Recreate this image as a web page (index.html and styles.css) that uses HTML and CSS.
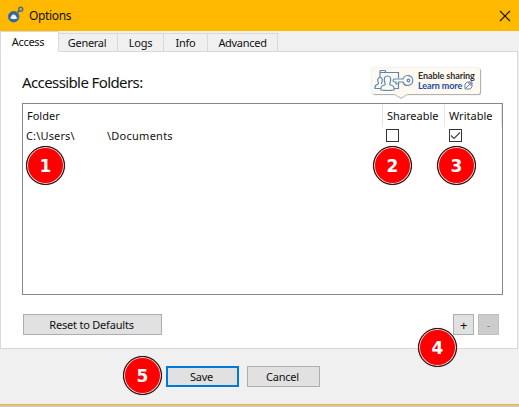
FILE: index.html
```html
<!DOCTYPE html>
<html lang="en">
<head>
<meta charset="utf-8">
<title>Options</title>
<link rel="stylesheet" href="styles.css">
</head>
<body>
<div class="window">
  <header class="titlebar">
    <svg class="app-icon" width="18" height="18" viewBox="0 0 18 18">
      <circle cx="6.700" cy="10.700" r="5.300" fill="#2866ad" stroke="#5c6b78" stroke-width="1"/>
      <path d="M3 12C4.500 11.500 4 8.500 6.500 8.500s2 2 4 3.500c-1 1.500-6 1.500-7.500 0z" fill="#f2f5fa"/>
      <path d="M10.500 6.500l1.500-1.500" stroke="#5c6b58" stroke-width="2"/>
      <circle cx="13.700" cy="3.300" r="2" fill="#d6b34b" stroke="#486b91" stroke-width="1.500"/>
    </svg>
    <h1>Options</h1>
    <svg class="close" width="12" height="12" viewBox="0 0 12 12"><path d="M1 1l10 10M11 1L1 11" fill="none" stroke="#171300" stroke-width="1.100"/></svg>
  </header>
  <nav class="tabs">
    <div class="tab active"><span>Access</span></div>
    <div class="tab general"><span>General</span></div>
    <div class="tab logs"><span>Logs</span></div>
    <div class="tab info"><span>Info</span></div>
    <div class="tab advanced"><span>Advanced</span></div>
  </nav>
  <main class="panel">
    <div class="heading">
      <h2>Accessible Folders:</h2>
      <div class="tip">
        <svg class="tip-icon" width="40" height="24" viewBox="0 0 40 24" fill="none" stroke="#5b87b5" stroke-width="1.200">
          <path d="M6 8V2.500q0-1 1-1h4l1 2h12.500V9M6 3.500h6M24.500 14v5.500H20"/>
          <path d="M9 19.500H1q-.5-3.500 3-4.500 1-.5 0-2Q3 8.500 6 8.500T8 13q-1 1.500 0 2"/>
          <path d="M7 21q-1-4 3.500-5 1.500-1 .3-2.500-1.800-6.500 2.700-6.500t2.700 6.500q-1.200 1.500.3 2.500 4.500 1 3.500 5-6.500 1-13 0z" fill="#fffaf1"/>
          <path d="M29 10h-8q-2 0-2 1.500t2 1.500h1v2h2.500v-2H29q1 3.500 4.500 3.500a5 5 0 1 0-4.500-6.500z" fill="#fffaf1"/>
          <circle cx="34.500" cy="11.500" r="1.300"/>
        </svg>
        <div class="tip-text">
          <div class="enable"><span>Enable sharing</span></div>
          <div class="learn"><span>Learn more</span><svg width="9" height="9" viewBox="0 0 9 9" fill="none" stroke="#637cb8"><path d="M3 1h5v5l-2 2H1V3zM2 7l5-5M4 2h3v3"/></svg></div>
        </div>
        <svg class="tip-tail" width="16" height="7" viewBox="0 0 16 7"><path d="M0 1l8 5 8-5" fill="#c6c3bc"/><path d="M0 0l8 4.500L16 0z" fill="#fffaf1"/></svg>
      </div>
    </div>
    <section class="list">
      <div class="row head">
        <div>Folder</div>
        <div>Shareable</div>
        <div>Writable</div>
      </div>
      <div class="row item">
        <div class="path"><span class="users">C:\Users\</span><span class="docs">\Documents</span></div>
        <div><i class="check"></i></div>
        <div><i class="check"><svg width="11" height="11" viewBox="0 0 11 11"><path d="M1 5.500L4 8.500 10 2.500" fill="none" stroke="#444" stroke-width="1.200"/></svg></i></div>
      </div>
    </section>
    <div class="actions">
      <button class="reset"><span>Reset to Defaults</span></button>
      <button class="small plus">+</button>
      <button class="small minus" disabled>-</button>
    </div>
  </main>
  <footer>
    <button class="save"><span>Save</span></button>
    <button class="cancel"><span>Cancel</span></button>
  </footer>
</div>
<div class="badge b1">1</div>
<div class="badge b2">2</div>
<div class="badge b3">3</div>
<div class="badge b4">4</div>
<div class="badge b5">5</div>
</body>
</html>
```
FILE: styles.css
```css
* { box-sizing: border-box; }
body { margin: 0; width: 519px; height: 407px; overflow: hidden; background: #c8c8c8; color: #111; font: 11px/14px "Noto Sans", sans-serif; }
.window { height: 405px; background: #f0f0f0; border-bottom: 1px solid #ffb900; }
.titlebar { height: 31px; background: #ffb900; display: flex; align-items: center; padding: 0 8px 0 7px; }
.app-icon { margin-right: 4px; margin-top: -1px; }
h1 { font: 12px/16px "Noto Sans", sans-serif; margin: 0 auto 0 0; letter-spacing: -.35px; }
.tabs { height: 21px; display: flex; align-items: flex-end; position: relative; z-index: 1; }
.tab { height: 19px; border: 1px solid #d9d9d9; border-left: 0; text-align: center; line-height: 18px; }
.tab.active { width: 59px; height: 21px; padding-right: 3px; background: #fff; border-left: 1px solid #d9d9d9; border-bottom-color: #fff; line-height: 20px; }
.general { width: 59px; padding-right: 2px; }
.logs { width: 46px; }
.info { width: 44px; }
.advanced { width: 70px; }
.tabs span { white-space: nowrap; letter-spacing: -.3px; }
.panel { width: 518px; height: 298px; margin-top: -1px; border: 1px solid #d9d9d9; background: #fff; padding: 16px 14px 0 21px; }
.heading { display: flex; height: 35px; }
h2 { margin: 4px auto 0 0; font: 15px/20px "Noto Sans", sans-serif; letter-spacing: -.6px; white-space: nowrap; }
.tip { position: relative; width: 108px; height: 26px; margin-right: 23px; padding: 1px 2px; background: #fffaf1; border-radius: 2px; box-shadow: 1px 1px 1px #aaa, 0 0 2px #ccc; display: flex; }
.tip-text { margin-left: 4px; font: bold 9px/10px Lato, sans-serif; white-space: nowrap; padding-top: 2px; color: #333; letter-spacing: -.1px; }
.enable { height: 10px; }
.learn { color: #2448a5; display: flex; height: 10px; }
.learn svg { margin-left: 2px; }
.tip-tail { position: absolute; left: 21px; top: 25px; }
.list { width: 481px; height: 192px; border: 1px solid #828790; }
.row { display: grid; grid-template-columns: 360px 62px 57px; }
.head { height: 23px; }
.head > div { border-right: 1px solid #e5e5e5; padding: 5px 0 0 4px; }
.item > div { padding: 2px 0 0 3px; height: 18px; }
.item > div:last-child { padding-left: 4px; }
.item .path { display: flex; }
.users { width: 81px; letter-spacing: .15px; }
.docs { letter-spacing: .25px; }
.check { display: block; width: 13px; height: 13px; border: 1px solid #333; background: #fff; }
.check svg { display: block; }
.actions { display: flex; margin-top: 19px; padding-left: 1px; }
button { height: 21px; padding: 0; border: 1px solid #adadad; border-radius: 0; background: #e1e1e1; color: #111; font: 11px/14px "Noto Sans", sans-serif; letter-spacing: -.2px; }
.reset { width: 139px; margin-right: auto; padding-right: 2px; }
.small { width: 21px; }
.plus { margin-right: 4px; font-size: 13px; }
.minus { margin-right: 4px; color: #838383; background: #ccc; border-color: #bfbfbf; }
footer { display: flex; gap: 8px; padding: 17px 0 0 166px; }
footer button { width: 73px; padding-right: 2px; }
.save { border: 2px solid #0078d7; }
.badge { position: absolute; width: 39px; height: 39px; border: 1px solid #111; border-radius: 50%; background: red; box-shadow: inset 0 0 0 1px #e8d8d8, 0 0 1px #777; color: #fff; text-align: center; font: bold 17px/38px "DejaVu Sans", sans-serif; z-index: 2; }
.b1 { left: 26px; top: 146px; }
.b2 { left: 373px; top: 146px; }
.b3 { left: 437px; top: 146px; }
.b4 { left: 418px; top: 328px; }
.b5 { left: 123px; top: 356px; }
```
